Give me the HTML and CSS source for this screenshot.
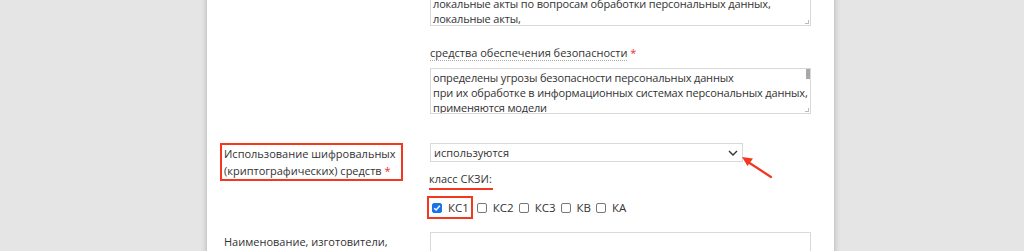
FILE: index.html
```html
<!DOCTYPE html>
<html lang="ru">
<head>
  <meta charset="UTF-8">
  <meta name="viewport" content="width=device-width, initial-scale=1.0">
  <title>Анкета ПДн</title>
  <link rel="stylesheet" href="styles.css">
</head>
<body>
  <div class="page">
    <div class="row row-docs">
      <div class="label"></div>
      <div class="field">
        <div class="area area-top">
          <p>локальные акты по вопросам обработки персональных данных,</p>
          <p>локальные акты,</p>
          <span class="grip"></span>
        </div>

        <div class="sub-label"><span class="hint">средства обеспечения безопасности</span> <span class="req">*</span></div>
        <div class="area">
          <p>определены угрозы безопасности персональных данных</p>
          <p>при их обработке в информационных системах персональных данных,</p>
          <p>применяются модели</p>
          <span class="scroll"></span>
          <span class="grip"></span>
        </div>
      </div>
    </div>

    <div class="row row-crypto">
      <div class="label">
        <span class="mark">Использование шифровальных<br>(криптографических) средств <span class="req">*</span></span>
      </div>
      <div class="field">
        <div class="select">
          <span>используются</span>
          <svg class="chevron" width="10" height="6" viewBox="0 0 10 6"><path d="M1 1 L5 5 L9 1" fill="none" stroke="#333" stroke-width="1.4"/></svg>
        </div>
        <div class="sub-label"><span class="underline">класс СКЗИ:</span></div>
        <div class="checks">
          <span class="mark mark-check"><span class="box checked"><svg width="8" height="8" viewBox="0 0 8 8"><path d="M1.2 4.2 L3.2 6 L6.8 1.8" fill="none" stroke="#fff" stroke-width="1.5"/></svg></span>КС1</span>
          <span class="check"><span class="box"></span>КС2</span>
          <span class="check"><span class="box"></span>КС3</span>
          <span class="check"><span class="box"></span>КВ</span>
          <span class="check"><span class="box"></span>КА</span>
        </div>
      </div>
    </div>

    <div class="row row-maker">
      <div class="label">Наименование, изготовители,</div>
      <div class="field">
        <div class="input"></div>
      </div>
    </div>

    <svg class="arrow" width="40" height="26" viewBox="0 0 40 26">
      <line x1="31" y1="22" x2="8" y2="7" stroke="#f2391f" stroke-width="2.2" stroke-linecap="round"/>
      <path d="M2 2 L13 3.5 L7.5 11 Z" fill="#f2391f"/>
    </svg>
  </div>
</body>
</html>
```

FILE: styles.css
```css
body {
  margin: 0;
  background: #e5e5e5;
  font-family: "Open Sans", "Noto Sans", sans-serif;
  font-size: 11px;
  color: #333;
  overflow: hidden;
}

.page {
  position: relative;
  width: 627px;
  height: 305px;
  margin-left: 207px;
  margin-top: -4px;
  background: #fff;
  box-shadow: 0 0 6px rgba(0, 0, 0, 0.25);
}

.row {
  display: grid;
  grid-template-columns: 206px 381px;
  padding-left: 17px;
}

.label {
  line-height: 17px;
}

.area {
  position: relative;
  box-sizing: border-box;
  height: 46px;
  padding: 1px 0 1px 2px;
  border: 1px solid #d9d9d9;
  line-height: 15px;
  letter-spacing: -0.16px;
  overflow: hidden;
}

.area p {
  margin: 0;
  white-space: nowrap;
}

.area-top {
  height: 30px;
  padding-top: 0;
  border-top: none;
}

.scroll {
  position: absolute;
  right: 0;
  top: 0;
  width: 4px;
  height: 10px;
  background: #a8a8a8;
}

.grip {
  position: absolute;
  right: 1px;
  bottom: 1px;
  width: 3px;
  height: 3px;
  border-right: 1px solid #bbb;
  border-bottom: 1px solid #bbb;
}

.sub-label {
  margin: 19px 0 7px;
  line-height: 16px;
}

.hint {
  border-bottom: 1px dotted #aaa;
}

.req {
  color: #e8322a;
}

.row-crypto {
  margin-top: 29px;
}

.row-crypto .sub-label {
  margin: 9px 0 6px;
}

.mark {
  display: inline-block;
  border: 2px solid #f2391f;
  padding: 1px 2px 0 2px;
}

.label .mark {
  margin-left: -4px;
  line-height: 16.5px;
  padding-right: 5px;
}

.select {
  display: flex;
  align-items: center;
  justify-content: space-between;
  box-sizing: border-box;
  width: 313px;
  height: 19px;
  padding: 0 4px 0 3px;
  border: 1px solid #d9d9d9;
}

.chevron {
  display: block;
}

.underline {
  display: inline-block;
  border-bottom: 2px solid #f2391f;
  padding: 0 1px 1px 0;
  margin-left: -1px;
}

.checks {
  display: flex;
  align-items: center;
  gap: 5px;
  font-size: 11.5px;
}

.check,
.mark-check {
  display: flex;
  align-items: center;
  gap: 6px;
}

.mark-check {
  margin-left: -3px;
  margin-right: -1px;
  padding: 2px 2px 2px 3px;
}

.box {
  display: flex;
  align-items: center;
  justify-content: center;
  box-sizing: border-box;
  width: 10px;
  height: 10px;
  border: 1px solid #777;
  border-radius: 2px;
  background: #fff;
}

.box.checked {
  border-color: #1a73e8;
  background: #1a73e8;
}

.row-maker {
  margin-top: 13px;
}

.row-maker .label {
  padding-top: 1px;
}

.input {
  height: 30px;
  border: 1px solid #d9d9d9;
}

.arrow {
  position: absolute;
  left: 533px;
  top: 159px;
}
```
